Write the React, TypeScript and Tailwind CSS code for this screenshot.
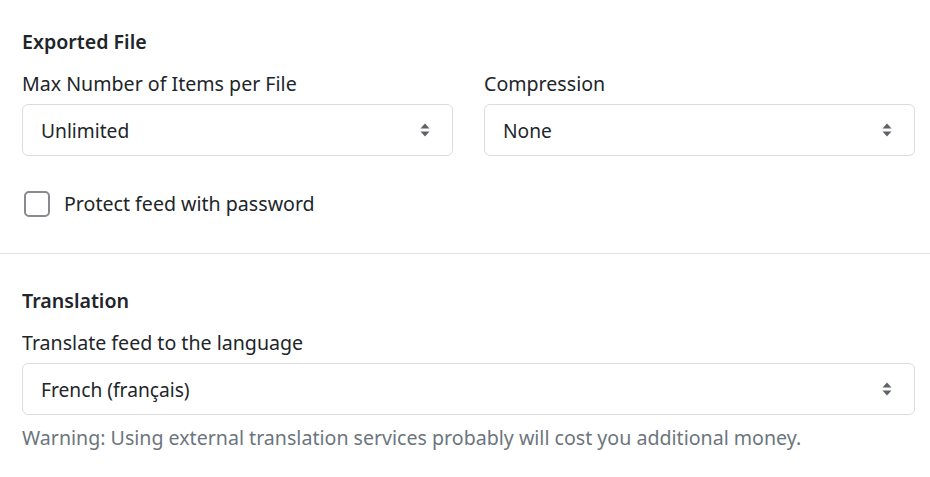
import React from "react";

const font = { fontFamily: '"Noto Sans", "Open Sans", sans-serif' };

function Arrows() {
  return (
    <svg width="10" height="14" viewBox="0 0 10 14" className="shrink-0">
      <path d="M5 0.5 L9.5 5.5 L0.5 5.5 Z" fill="#5f6368" />
      <path d="M0.5 8.5 L9.5 8.5 L5 13.5 Z" fill="#5f6368" />
    </svg>
  );
}

function Select({ value }: { value: string }) {
  return (
    <div className="flex h-[52px] items-center justify-between rounded-[6px] border border-[#dcdcdc] bg-white pl-[18px] pr-[22px] text-[19.2px] text-[#212529]">
      <span className="pt-[2px]">{value}</span>
      <Arrows />
    </div>
  );
}

export default function App() {
  return (
    <div className="w-[930px] h-[477px] bg-white text-[#212529]" style={font}>
      <div className="pl-[22px] pr-[15px] pt-[28px] pb-[34px]">
        <div className="text-[19.6px] font-semibold leading-[28px]">Exported File</div>
        <div className="mt-[13px] grid grid-cols-2 gap-[31px]">
          <div>
            <div className="text-[19.6px] leading-[30px]">Max Number of Items per File</div>
            <div className="mt-[5px]">
              <Select value="Unlimited" />
            </div>
          </div>
          <div>
            <div className="text-[19.6px] leading-[30px]">Compression</div>
            <div className="mt-[5px]">
              <Select value="None" />
            </div>
          </div>
        </div>
        <div className="mt-[33px] flex items-center gap-[14px]">
          <div className="ml-[2px] h-[26px] w-[26px] rounded-[5px] border-2 border-[#878a8e] bg-white" />
          <span className="text-[19.6px] leading-[30px]">Protect feed with password</span>
        </div>
      </div>
      <div className="h-px bg-[#e3e3e3]" />
      <div className="pl-[22px] pr-[15px] pt-[33px]">
        <div className="text-[19.6px] font-semibold leading-[28px]">Translation</div>
        <div className="mt-[13px] text-[19.6px] leading-[30px]">Translate feed to the language</div>
        <div className="mt-[5px]">
          <Select value="French (français)" />
        </div>
        <div className="mt-[9px] text-[19.6px] leading-[28px] text-[#6c757d]">
          Warning: Using external translation services probably will cost you additional money.
        </div>
      </div>
    </div>
  );
}
